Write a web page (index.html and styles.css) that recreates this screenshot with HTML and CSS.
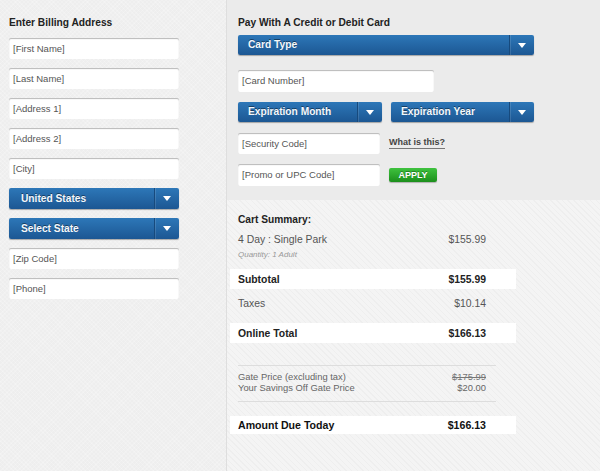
FILE: index.html
```html
<!DOCTYPE html>
<html lang="en">
<head>
  <meta charset="UTF-8">
  <title>Checkout</title>
  <meta name="viewport" content="width=device-width, initial-scale=1.0">
  <link rel="stylesheet" href="styles.css">
</head>
<body>
  <div class="page">
    <div class="billing">
      <h3>Enter Billing Address</h3>
      <div class="field">[First Name]</div>
      <div class="field">[Last Name]</div>
      <div class="field">[Address 1]</div>
      <div class="field">[Address 2]</div>
      <div class="field">[City]</div>
      <div class="select"><span>United States</span><i class="arrow"></i></div>
      <div class="select"><span>Select State</span><i class="arrow"></i></div>
      <div class="field">[Zip Code]</div>
      <div class="field">[Phone]</div>
    </div>

    <div class="payment">
      <div class="card-panel">
        <h3 class="tight">Pay With A Credit or Debit Card</h3>
        <div class="select card-type"><span>Card Type</span><i class="arrow"></i></div>
        <div class="field card-number">[Card Number]</div>
        <div class="pair">
          <div class="select exp"><span>Expiration Month</span><i class="arrow"></i></div>
          <div class="select exp"><span>Expiration Year</span><i class="arrow"></i></div>
        </div>
        <div class="pair security">
          <div class="field short">[Security Code]</div>
          <a class="help" href="#">What is this?</a>
        </div>
        <div class="pair promo">
          <div class="field short tall">[Promo or UPC Code]</div>
          <button class="apply">APPLY</button>
        </div>
      </div>

      <div class="cart">
        <h3>Cart Summary:</h3>
        <div class="item"><span>4 Day : Single Park</span><span>$155.99</span></div>
        <div class="qty">Quantity: 1 Adult</div>
        <div class="row band subtotal"><span>Subtotal</span><span>$155.99</span></div>
        <div class="row taxes"><span>Taxes</span><span>$10.14</span></div>
        <div class="row band online"><span>Online Total</span><span>$166.13</span></div>
        <div class="gate">
          <div class="line"><span>Gate Price (excluding tax)</span><s>$175.99</s></div>
          <div class="line"><span>Your Savings Off Gate Price</span><span>$20.00</span></div>
        </div>
        <div class="row band due"><span>Amount Due Today</span><span>$166.13</span></div>
      </div>
    </div>
  </div>
</body>
</html>
```

FILE: styles.css
```css
body {
  margin: 0;
  font-family: "Liberation Sans", Arial, sans-serif;
  color: #333;
  background: #eeeeee;
}
.page {
  display: flex;
  width: 600px;
  height: 471px;
  overflow: hidden;
}
h3 {
  margin: 0 0 9px;
  font-size: 10.2px;
  line-height: 13px;
  color: #222;
}
h3.tight {
  margin-bottom: 6px;
}

/* left column */
.billing {
  width: 217px;
  padding: 16px 0 0 9px;
  border-right: 1px solid #dedede;
  background-color: #eeeeee;
  background-image: repeating-linear-gradient(45deg, rgba(255,255,255,0.18) 0 1px, transparent 1px 3px),
    repeating-linear-gradient(-45deg, rgba(255,255,255,0.18) 0 1px, transparent 1px 3px);
}
.billing .field,
.billing .select {
  width: 170px;
  margin-bottom: 9px;
}

.field {
  box-sizing: border-box;
  height: 21px;
  padding: 0 4px;
  background: #fff;
  border-radius: 2px;
  box-shadow: inset 0 1px 1px rgba(0,0,0,0.28);
  font-size: 9.5px;
  line-height: 22px;
  color: #555;
}
.select {
  box-sizing: border-box;
  display: flex;
  height: 21px;
  background: linear-gradient(#2d77b8, #1c5793);
  border-radius: 2px;
  box-shadow: 0 1px 1px rgba(0,0,0,0.3);
  color: #f4f8fc;
  font-size: 10.2px;
  font-weight: bold;
  line-height: 21px;
  text-shadow: 0 -1px 0 rgba(0,0,0,0.45);
}
.select span {
  flex: 1;
  padding-left: 12px;
}
.arrow {
  position: relative;
  width: 24px;
  border-left: 1px solid #174a7d;
  box-shadow: inset 1px 0 0 rgba(255,255,255,0.12);
}
.arrow::after {
  content: "";
  position: absolute;
  left: 8px;
  top: 8px;
  border-left: 4px solid transparent;
  border-right: 4px solid transparent;
  border-top: 5px solid #fff;
}

/* right column */
.payment {
  flex: 1;
  display: flex;
  flex-direction: column;
}
.card-panel {
  height: 200px;
  box-sizing: border-box;
  padding: 16px 0 0 11px;
  background: #ebebeb;
}
.card-type {
  width: 296px;
  height: 20px;
  line-height: 20px;
}
.card-type span,
.exp span {
  padding-left: 10px;
}
.card-number {
  width: 196px;
  height: 22px;
  margin-top: 15px;
}
.pair {
  display: flex;
  align-items: center;
  gap: 9px;
  margin-top: 10px;
}
.exp {
  width: 144px;
  height: 20px;
  line-height: 20px;
}
.exp + .exp {
  width: 143px;
}
.security {
  margin-top: 11px;
}
.short {
  width: 142px;
}
.tall {
  height: 22px;
}
.help {
  font-size: 9px;
  font-weight: bold;
  color: #444;
  text-decoration: none;
  border-bottom: 1px solid #777;
  line-height: 11px;
  margin-top: -2px;
}
.apply {
  width: 48px;
  height: 14px;
  padding: 0;
  border: 0;
  border-radius: 2px;
  background: linear-gradient(#3fc23f, #1c8f1c);
  box-shadow: 0 1px 1px rgba(0,0,0,0.25);
  color: #fff;
  font-family: inherit;
  font-size: 9px;
  font-weight: bold;
  text-shadow: 0 -1px 0 rgba(0,0,0,0.3);
}

/* cart */
.cart {
  flex: 1;
  padding: 13px 0 0 3px;
  background-color: #f4f4f4;
  background-image: repeating-linear-gradient(45deg, rgba(0,0,0,0.022) 0 1px, transparent 1px 4px);
}
.cart h3 {
  margin: 0 0 0 8px;
}
.item,
.row,
.line {
  display: flex;
  justify-content: space-between;
  width: 248px;
  padding: 0 30px 0 8px;
}
.item {
  margin-top: 8px;
  font-size: 10.4px;
  line-height: 12px;
  color: #555;
}
.qty {
  margin: 4px 0 0 8px;
  font-size: 8px;
  font-style: italic;
  line-height: 10px;
  color: #999;
}
.row {
  height: 20px;
  align-items: center;
  font-size: 10.4px;
}
.band {
  background: #fff;
  font-weight: bold;
  color: #222;
}
.subtotal {
  margin-top: 9px;
}
.taxes {
  margin-top: 4px;
  color: #555;
}
.online {
  margin-top: 10px;
}
.gate {
  width: 258px;
  margin: 22px 0 0 8px;
  padding: 5px 0 8px;
  border-top: 1px solid #ddd;
  border-bottom: 1px solid #ddd;
}
.gate .line {
  width: 248px;
  padding: 0;
  font-size: 9.4px;
  line-height: 11px;
  color: #666;
}
.gate s {
  color: #777;
}
.due {
  height: 18px;
  margin-top: 14px;
  font-size: 10.6px;
  color: #111;
}
```
